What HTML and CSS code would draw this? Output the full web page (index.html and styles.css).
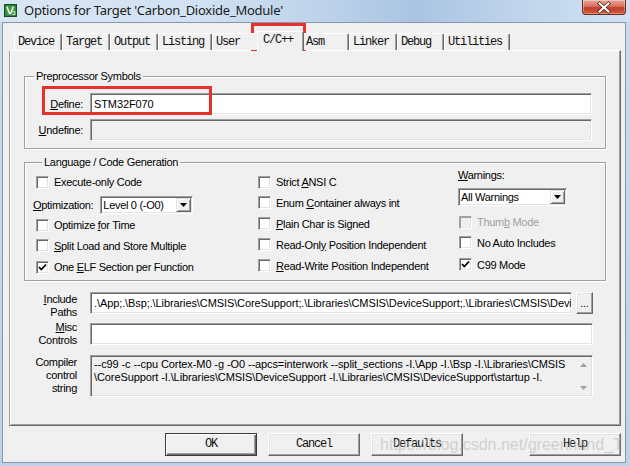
FILE: index.html
```html
<!DOCTYPE html>
<html>
<head>
<meta charset="utf-8">
<title>Options for Target</title>
<link rel="stylesheet" href="styles.css">
</head>
<body>
<div class="window">
  <div class="titlebar">
    <svg class="app-icon" viewBox="0 0 13 13" width="13" height="13">
      <rect x="0.5" y="0.5" width="12" height="12" fill="#2d6e31" stroke="#1a4a1d"/>
      <rect x="1.5" y="1.5" width="10" height="10" fill="#3f9a45"/>
      <path d="M2.8 2.8 L5.6 9.6 L6.6 9.6 L9.4 2.8" fill="none" stroke="#fff" stroke-width="1.5"/>
      <path d="M8.6 7.6 h2.2 v3 h-2.2" fill="none" stroke="#e8f5e9" stroke-width="0.9"/>
    </svg>
    <span class="title">Options for Target 'Carbon_Dioxide_Module'</span>
    <div class="close-btn">
      <svg viewBox="0 0 44 15" width="44" height="15">
        <path d="M17.5 3.5 L26.5 11.5 M26.5 3.5 L17.5 11.5" stroke="#5a2a20" stroke-width="3.6" stroke-linecap="square"/>
        <path d="M17.5 3.5 L26.5 11.5 M26.5 3.5 L17.5 11.5" stroke="#fff" stroke-width="2" stroke-linecap="square"/>
      </svg>
    </div>
  </div>

  <div class="client">
    <div class="tabs">
      <div class="tab">Device</div>
      <div class="tab">Target</div>
      <div class="tab">Output</div>
      <div class="tab">Listing</div>
      <div class="tab">User</div>
      <div class="tab active">C/C++</div>
      <div class="tab">Asm</div>
      <div class="tab">Linker</div>
      <div class="tab">Debug</div>
      <div class="tab">Utilities</div>
    </div>

    <div class="page">
      <fieldset class="group group-pre">
        <legend>Preprocessor Symbols</legend>
        <div class="sym-grid">
          <label class="lbl"><u>D</u>efine:</label>
          <div class="edit">STM32F070</div>
          <label class="lbl"><u>U</u>ndefine:</label>
          <div class="edit disabled"></div>
        </div>
      </fieldset>

      <fieldset class="group group-lang">
        <legend>Language / Code Generation</legend>
        <div class="lang-grid">
          <div class="col col-left">
            <div class="cb-row h20"><span class="cb"></span><span>Execute-only Code</span></div>
            <div class="opt-row">
              <span><u>O</u>ptimization:</span>
              <div class="combo combo-opt">
                <span class="combo-text">Level 0 (-O0)</span>
                <span class="combo-btn"><svg viewBox="0 0 7 4" width="7" height="4"><path d="M0 0 H7 L3.5 4 Z" fill="#000"/></svg></span>
              </div>
            </div>
            <div class="cb-row h20"><span class="cb"></span><span>Optimize <u>f</u>or Time</span></div>
            <div class="cb-row h21"><span class="cb"></span><span><u>S</u>plit Load and Store Multiple</span></div>
            <div class="cb-row h22"><span class="cb checked"><svg viewBox="0 0 11 11" width="11" height="11"><path d="M2 5 L4.3 7.5 L9 2.5" fill="none" stroke="#000" stroke-width="1.8"/></svg></span><span>One <u>E</u>LF Section per Function</span></div>
          </div>

          <div class="col col-mid">
            <div class="cb-row h20"><span class="cb"></span><span>Strict <u>A</u>NSI C</span></div>
            <div class="cb-row h21"><span class="cb"></span><span>Enum <u>C</u>ontainer always int</span></div>
            <div class="cb-row h21"><span class="cb"></span><span><u>P</u>lain Char is Signed</span></div>
            <div class="cb-row h21"><span class="cb"></span><span>Read-Onl<u>y</u> Position Independent</span></div>
            <div class="cb-row h21"><span class="cb"></span><span><u>R</u>ead-Write Position Independent</span></div>
          </div>

          <div class="col col-right">
            <div class="warn-label"><u>W</u>arnings:</div>
            <div class="combo combo-warn">
              <span class="combo-text">All Warnings</span>
              <span class="combo-btn"><svg viewBox="0 0 7 4" width="7" height="4"><path d="M0 0 H7 L3.5 4 Z" fill="#000"/></svg></span>
            </div>
            <div class="cb-row h20 thumb disabled-row"><span class="cb disabled"></span><span>Thum<u>b</u> Mode</span></div>
            <div class="cb-row h21"><span class="cb"></span><span>No Auto Includes</span></div>
            <div class="cb-row h23"><span class="cb checked"><svg viewBox="0 0 11 11" width="11" height="11"><path d="M2 5 L4.3 7.5 L9 2.5" fill="none" stroke="#000" stroke-width="1.8"/></svg></span><span>C99 Mode</span></div>
          </div>
        </div>
      </fieldset>

      <div class="paths">
        <label class="plbl top"><u>I</u>nclude<br>Paths</label>
        <div class="path-field">
          <div class="edit path-edit">.\App;.\Bsp;.\Libraries\CMSIS\CoreSupport;.\Libraries\CMSIS\DeviceSupport;.\Libraries\CMSIS\DeviceSupport\startup</div>
          <div class="dots-btn">...</div>
        </div>
        <label class="plbl"><u>M</u>isc<br>Controls</label>
        <div class="edit"></div>
        <label class="plbl">Compiler<br>control<br>string</label>
        <div class="edit disabled compile">
          <div class="compile-text">--c99 -c --cpu Cortex-M0 -g -O0 --apcs=interwork --split_sections -I.\App -I.\Bsp -I.\Libraries\CMSIS<br>\CoreSupport -I.\Libraries\CMSIS\DeviceSupport -I.\Libraries\CMSIS\DeviceSupport\startup -I.</div>
          <div class="vscroll">
            <svg viewBox="0 0 7 4" width="7" height="4"><path d="M0 4 H7 L3.5 0 Z" fill="#a0a0a0"/></svg>
            <svg viewBox="0 0 7 4" width="7" height="4"><path d="M0 0 H7 L3.5 4 Z" fill="#a0a0a0"/></svg>
          </div>
        </div>
      </div>
    </div>

    <div class="buttons">
      <div class="btn default">OK</div>
      <div class="btn">Cancel</div>
      <div class="btn">Defaults</div>
      <div class="btn help">Help</div>
    </div>
  </div>

  <div class="watermark">https://blog.csdn.net/greenhand_T</div>
  <div class="mark mark-tab"></div>
  <div class="mark mark-define"></div>
</div>
</body>
</html>
```

FILE: styles.css
```css
* { box-sizing: border-box; }

body {
  margin: 0;
  width: 630px;
  height: 466px;
  overflow: hidden;
  font-family: "Liberation Sans", Arial, sans-serif;
  font-size: 11px;
  letter-spacing: -0.3px;
  color: #000;
  background: #c2d6ec;
}

u { text-decoration: underline; text-underline-offset: 1px; }

.window {
  position: relative;
  width: 630px;
  height: 466px;
  background: linear-gradient(180deg, #c9dcef 0%, #bcd2ea 100%);
  overflow: hidden;
}

/* ---------- title bar ---------- */
.titlebar {
  height: 22px;
  display: flex;
  align-items: flex-start;
  padding-left: 4px;
  background: linear-gradient(90deg, #d8e6f4 0%, #d2e2f3 30%, #bcd2ea 52%, #a9c4e2 66%, #bfd4ec 82%, #d0e1f2 100%);
}
.app-icon { margin-top: 4px; flex: none; }
.title {
  margin-left: 7px;
  margin-top: 1px;
  font-family: "Noto Sans", "Open Sans", sans-serif;
  font-size: 13px;
  letter-spacing: -0.25px;
  line-height: 19px;
  color: #1a1a1a;
  white-space: nowrap;
}
.close-btn {
  margin-left: auto;
  margin-right: 4px;
  width: 44px;
  height: 15px;
  border: 1px solid #6e2a1f;
  border-top: none;
  border-radius: 0 0 4px 4px;
  background: linear-gradient(180deg, #e9a99b 0%, #d9705e 45%, #c23e27 55%, #cf5a3e 100%);
  box-shadow: inset 0 0 0 1px rgba(255,255,255,0.35);
  overflow: hidden;
}
.close-btn svg { display: block; margin-left: -1px; }

/* ---------- client ---------- */
.client {
  margin-left: 2px;
  width: 624px;
  height: 441px;
  background: #f0f0f0;
  border: 1px solid #8798ab;
}

.tabs {
  display: flex;
  align-items: flex-end;
  height: 27px;
  padding-left: 11px;
  position: relative;
  z-index: 1;
  font-family: "Liberation Mono", "Courier New", monospace;
  font-size: 12px;
  letter-spacing: -1.2px;
  color: #111;
}
.tab {
  height: 17px;
  min-width: 47px;
  padding: 0 7px 0 3px;
  line-height: 16px;
  background: #f0f0f0;
  border-top: 1px solid #fff;
  border-left: 1px solid #fff;
  border-right: 1px solid #696969;
  border-radius: 2px 2px 0 0;
  box-shadow: inset -1px 0 0 #a0a0a0;
  white-space: nowrap;
}
.tab.active {
  height: 20px;
  margin: 0 -2px -1px;
  padding: 0 9px 0 5px;
  position: relative;
  z-index: 2;
}

.page {
  margin-left: 6px;
  width: 612px;
  height: 376px;
  border-top: 1px solid #fff;
  border-left: 1px solid #a0a0a0;
  border-right: 1px solid #696969;
  border-bottom: 1px solid #696969;
  box-shadow: inset 1px 0 0 #fff, inset -1px -1px 0 #a0a0a0;
}

/* ---------- group boxes ---------- */
.group {
  margin: 0 0 0 14px;
  width: 582px;
  padding: 0;
  border: 1px solid #a0a0a0;
  box-shadow: inset 1px 1px 0 #fff, 1px 1px 0 #fff;
  min-width: 0;
}
.group legend {
  margin-left: 9px;
  padding: 0 2px;
  line-height: 14px;
  height: 14px;
}
.group-pre {
  margin-top: 18px;
  padding: 10px 0 7px 0;
}
.group-lang {
  margin-top: 6px;
  padding: 0 0 2px 8px;
}

.sym-grid {
  display: grid;
  grid-template-columns: 58px 502px;
  grid-template-rows: 22px 22px;
  column-gap: 7px;
  row-gap: 4px;
}
.lbl {
  text-align: right;
  align-self: center;
  line-height: 13px;
}

.edit {
  height: 22px;
  background: #fff;
  border-style: solid;
  border-width: 1px;
  border-color: #a0a0a0 #fff #fff #a0a0a0;
  box-shadow: inset 1px 1px 0 #696969, inset -1px -1px 0 #e3e3e3;
  padding: 0 2px 0 3px;
  line-height: 20px;
  white-space: nowrap;
  overflow: hidden;
  letter-spacing: -0.1px;
}
.edit.disabled { background: #f0f0f0; }

/* ---------- language grid ---------- */
.lang-grid {
  display: grid;
  grid-template-columns: 225px 200px 1fr;
}
.col { display: flex; flex-direction: column; }
.col-left, .col-mid { padding-top: 3px; }
.col-left .cb-row { padding-left: 3px; }

.cb-row {
  display: flex;
  align-items: center;
  gap: 5px;
  white-space: nowrap;
}
.h20 { height: 20px; }
.h21 { height: 21px; }
.h22 { height: 22px; }
.h23 { height: 23px; }

.cb {
  width: 13px;
  height: 13px;
  flex: none;
  background: #fff;
  border: 1px solid;
  border-color: #a0a0a0 #fff #fff #a0a0a0;
  box-shadow: inset 1px 1px 0 #696969, inset -1px -1px 0 #e3e3e3;
  display: flex;
  align-items: center;
  justify-content: center;
}
.cb svg { display: block; }
.cb.disabled { background: #f0f0f0; box-shadow: inset 1px 1px 0 #a0a0a0, inset -1px -1px 0 #e3e3e3; }
.disabled-row { color: #a0a0a0; }
.thumb { margin-top: 6px; padding-left: 1px; }
.col-right .cb-row { padding-left: 1px; }

.opt-row {
  display: flex;
  align-items: center;
  gap: 7px;
  height: 18px;
  margin: 4px 0 1px;
  white-space: nowrap;
}

.combo {
  display: flex;
  align-items: center;
  height: 18px;
  background: #fff;
  border: 1px solid;
  border-color: #a0a0a0 #fff #fff #a0a0a0;
  box-shadow: inset 1px 1px 0 #696969, inset -1px -1px 0 #e3e3e3;
  padding: 1px 1px 1px 2px;
}
.combo-opt { width: 93px; }
.combo-warn { width: 109px; margin-top: 7px; }
.combo-text { flex: 1; line-height: 14px; white-space: nowrap; }
.combo-btn {
  width: 15px;
  height: 14px;
  flex: none;
  background: #f0f0f0;
  border: 1px solid;
  border-color: #e3e3e3 #696969 #696969 #e3e3e3;
  box-shadow: inset 1px 1px 0 #fff, inset -1px -1px 0 #a0a0a0;
  display: flex;
  align-items: center;
  justify-content: center;
}
.combo-btn svg { display: block; }

.warn-label {
  height: 12px;
  line-height: 12px;
  white-space: nowrap;
}

/* ---------- paths ---------- */
.paths {
  display: grid;
  grid-template-columns: 67px 503px;
  grid-template-rows: 22px 22px 43px;
  column-gap: 13px;
  row-gap: 9px;
  margin-top: 11px;
}
.plbl {
  text-align: right;
  line-height: 13px;
  align-self: center;
}
.plbl.top { align-self: start; padding-top: 1px; }

.path-field { display: flex; gap: 4px; }
.path-edit { width: 482px; flex: none; }
.dots-btn {
  width: 17px;
  height: 22px;
  background: #f0f0f0;
  border: 1px solid;
  border-color: #fff #696969 #696969 #fff;
  box-shadow: inset -1px -1px 0 #a0a0a0, inset 1px 1px 0 #e3e3e3;
  text-align: center;
  line-height: 22px;
  font-size: 10px;
  letter-spacing: 0;
}

.compile {
  height: 42px;
  align-self: end;
  display: flex;
  padding: 2px 1px 2px 3px;
  white-space: normal;
}
.compile-text {
  flex: 1;
  line-height: 13px;
  white-space: nowrap;
  overflow: hidden;
}
.vscroll {
  width: 15px;
  flex: none;
  display: flex;
  flex-direction: column;
  align-items: center;
  justify-content: space-between;
  padding: 5px 0 4px;
}
.vscroll svg { display: block; }

/* ---------- buttons ---------- */
.buttons {
  display: flex;
  justify-content: flex-end;
  gap: 11px;
  margin-top: 7px;
  padding-right: 4px;
  font-family: "Liberation Mono", "Courier New", monospace;
  font-size: 12px;
  letter-spacing: -1.2px;
  color: #111;
}
.btn {
  width: 92px;
  height: 23px;
  background: #f0f0f0;
  border: 1px solid;
  border-color: #fff #696969 #696969 #fff;
  box-shadow: inset -1px -1px 0 #a0a0a0, inset 1px 1px 0 #e3e3e3;
  text-align: center;
  line-height: 21px;
}
.btn.default {
  border-color: #3c3c3c;
  box-shadow: inset 1px 1px 0 #fff, inset -1px -1px 0 #696969, inset -2px -2px 0 #a0a0a0;
}
.btn.help { margin-left: 55px; }

/* ---------- overlays ---------- */
.watermark {
  position: absolute;
  left: 380px;
  top: 436px;
  font-family: "Liberation Sans", Arial, sans-serif;
  font-size: 16px;
  letter-spacing: 0;
  color: rgba(185, 185, 185, 0.6);
  white-space: nowrap;
  pointer-events: none;
}
.mark {
  position: absolute;
  border: 3px solid #e8302c;
  pointer-events: none;
}
.mark-tab { left: 251px; top: 23px; width: 55px; height: 28px; }
.mark-define { left: 42px; top: 86px; width: 170px; height: 29px; }
```
